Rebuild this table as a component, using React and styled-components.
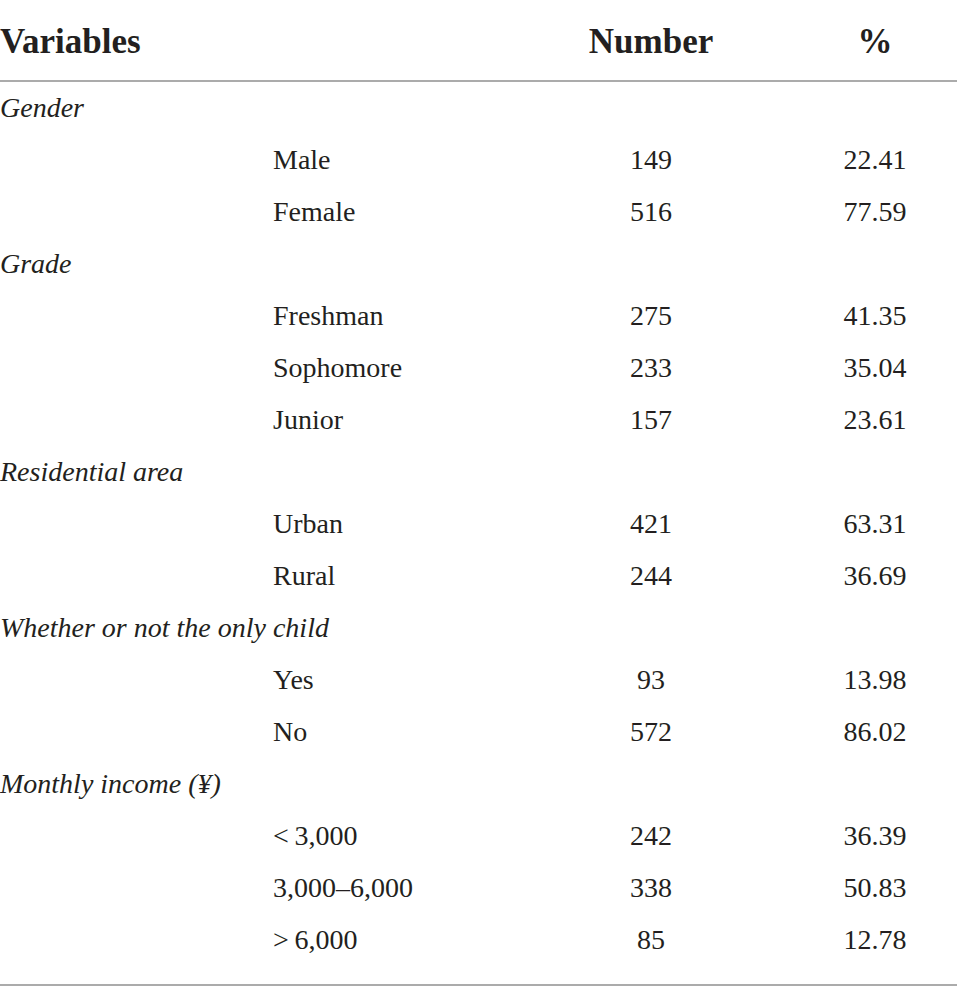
import React from 'react';
import styled, { createGlobalStyle } from 'styled-components';

const GlobalStyle = createGlobalStyle`
  body {
    margin: 0;
    background: #ffffff;
    font-family: "Liberation Serif", "Times New Roman", serif;
    color: #231f20;
  }
`;

const Table = styled.div`
  width: 957px;
  display: grid;
  grid-template-columns: 273px 236px 284px 164px;
`;

const HeadCell = styled.div`
  height: 82px;
  box-sizing: border-box;
  padding-top: 4px;
  display: flex;
  align-items: center;
  justify-content: ${({ center }) => (center ? 'center' : 'flex-start')};
  grid-column: ${({ span }) => span || 'auto'};
  font-size: 35px;
  font-weight: bold;
  border-bottom: 2px solid #ababab;
`;

const Body = styled.div`
  grid-column: 1 / -1;
  display: grid;
  grid-template-columns: 273px 236px 284px 164px;
  padding-bottom: 18px;
  border-bottom: 2px solid #ababab;
`;

const Group = styled.div`
  grid-column: 1 / -1;
  height: 52px;
  display: flex;
  align-items: center;
  font-size: 28px;
  font-style: italic;
`;

const Cell = styled.div`
  height: 52px;
  display: flex;
  align-items: center;
  justify-content: ${({ center }) => (center ? 'center' : 'flex-start')};
  font-size: 28px;
  white-space: nowrap;
`;

const groups = [
  {
    title: 'Gender',
    rows: [
      ['Male', '149', '22.41'],
      ['Female', '516', '77.59'],
    ],
  },
  {
    title: 'Grade',
    rows: [
      ['Freshman', '275', '41.35'],
      ['Sophomore', '233', '35.04'],
      ['Junior', '157', '23.61'],
    ],
  },
  {
    title: 'Residential area',
    rows: [
      ['Urban', '421', '63.31'],
      ['Rural', '244', '36.69'],
    ],
  },
  {
    title: 'Whether or not the only child',
    rows: [
      ['Yes', '93', '13.98'],
      ['No', '572', '86.02'],
    ],
  },
  {
    title: 'Monthly income (¥)',
    rows: [
      ['<\u20093,000', '242', '36.39'],
      ['3,000–6,000', '338', '50.83'],
      ['>\u20096,000', '85', '12.78'],
    ],
  },
];

const App = () => (
  <>
    <GlobalStyle />
    <Table>
      <HeadCell span="1 / 3">Variables</HeadCell>
      <HeadCell center>Number</HeadCell>
      <HeadCell center>%</HeadCell>
      <Body>
        {groups.map((g) => (
          <React.Fragment key={g.title}>
            <Group>{g.title}</Group>
            {g.rows.map(([label, num, pct]) => (
              <React.Fragment key={label}>
                <Cell />
                <Cell>{label}</Cell>
                <Cell center>{num}</Cell>
                <Cell center>{pct}</Cell>
              </React.Fragment>
            ))}
          </React.Fragment>
        ))}
      </Body>
    </Table>
  </>
);

export default App;
